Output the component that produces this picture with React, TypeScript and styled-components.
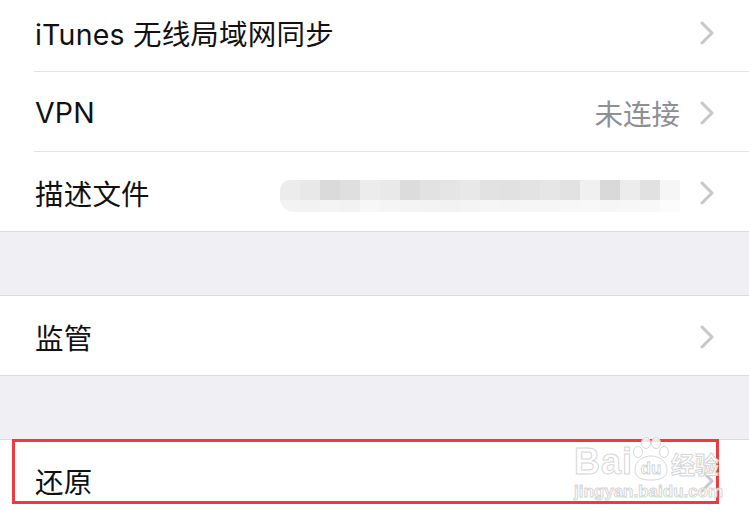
import styled, { createGlobalStyle } from "styled-components";

const GlobalStyle = createGlobalStyle`
  html, body {
    margin: 0;
    padding: 0;
    background: #efeff4;
    overflow: hidden;
  }
  body {
    font-family: Inter, "Noto Sans CJK SC", sans-serif;
  }
`;

const Page = styled.div`
  position: relative;
  width: 749px;
  height: 516px;
  overflow: hidden;
  background: #efeff4;
`;

const Group = styled.div<{ $first?: boolean }>`
  background: #fff;
  border-top: ${(p) => (p.$first ? "none" : "1px solid #dcdce0")};
  border-bottom: 1px solid #dcdce0;
  margin-top: ${(p) => (p.$first ? "-8px" : "0")};
`;

const Spacer = styled.div`
  height: 63px;
`;

const Row = styled.div<{ $divider?: boolean }>`
  height: 79px;
  display: flex;
  align-items: center;
  padding: 2px 35px 0 35px;
  box-sizing: border-box;
  position: relative;
  ${(p) =>
    p.$divider &&
    `
    margin-bottom: 1px;
    &::after {
      content: "";
      position: absolute;
      left: 34px;
      right: 0;
      bottom: -1px;
      height: 1px;
      background: #e2e2e5;
    }
  `}
`;

const Label = styled.span`
  font-size: 28.5px;
  color: #111;
  flex: 1;
  letter-spacing: 0.2px;
`;

const Detail = styled.span`
  font-size: 28.5px;
  color: #8e8e93;
  margin-right: 20px;
`;

const Mosaic = styled.div`
  display: grid;
  grid-template-columns: repeat(20, 20px);
  grid-template-rows: 20px 12px;
  margin-right: 20px;
  margin-top: 6px;
  border-radius: 10px 0 0 14px;
  overflow: hidden;
`;

const Tile = styled.div<{ $shade: string }>`
  background: ${(p) => p.$shade};
`;

const ChevronWrap = styled.svg`
  width: 14px;
  height: 24px;
  flex: none;
`;

const Highlight = styled.div`
  position: absolute;
  left: 12px;
  top: 439px;
  width: 701px;
  height: 59px;
  border: 3px solid #f0393d;
`;

const Watermark = styled.div`
  position: absolute;
  left: 574px;
  top: 436px;
  width: 150px;
  height: 68px;
  pointer-events: none;
  font-family: "Liberation Sans", Arial, "Noto Sans CJK SC", sans-serif;
  color: rgba(255, 255, 255, 0.85);
  -webkit-text-stroke: 1px #d6d6d6;
`;

const MarkLine = styled.div`
  display: flex;
  align-items: flex-end;
  height: 46px;
`;

const MarkBai = styled.span`
  font-size: 36px;
  font-weight: 700;
  line-height: 40px;
  letter-spacing: 1px;
`;

const MarkPaw = styled.svg`
  width: 38px;
  height: 46px;
  margin: 0 1px 0 -1px;
`;

const MarkCn = styled.span`
  font-size: 24px;
  font-weight: 700;
  line-height: 36px;
  font-family: "Noto Sans CJK SC", sans-serif;
`;

const MarkUrl = styled.div`
  font-size: 17px;
  font-weight: 700;
  margin-top: 0px;
`;

function Chevron() {
  return (
    <ChevronWrap viewBox="0 0 14 24">
      <path
        d="M2 2 L12 12 L2 22"
        fill="none"
        stroke="#c7c7cc"
        strokeWidth="3"
        strokeLinecap="round"
        strokeLinejoin="round"
      />
    </ChevronWrap>
  );
}

const topShades = [
  "#ececec", "#e8e8e8", "#dadada", "#dfdfdf", "#ececec", "#e9e9e9", "#dcdcdc", "#e2e2e2",
  "#e5e5e5", "#e8e8e8", "#e2e2e2", "#e1e1e1", "#e3e3e3", "#e6e6e6", "#e2e2e2", "#f0f0f0",
  "#d9d9d9", "#ececec", "#e1e1e1", "#f6f6f6",
];
const bottomShades = [
  "#f3f3f3", "#f2f2f2", "#f4f4f4", "#f2f2f2", "#f7f7f7", "#f5f5f5", "#f4f4f4", "#f3f3f3",
  "#f2f2f2", "#f4f4f4", "#f6f6f6", "#f5f5f5", "#f6f6f6", "#f6f6f6", "#f7f7f7", "#f8f8f8",
  "#f6f6f6", "#f7f7f7", "#f8f8f8", "#fcfcfc",
];

export default function App() {
  return (
    <Page>
      <GlobalStyle />
      <Group $first>
        <Row $divider>
          <Label>iTunes 无线局域网同步</Label>
          <Chevron />
        </Row>
        <Row $divider>
          <Label>VPN</Label>
          <Detail>未连接</Detail>
          <Chevron />
        </Row>
        <Row>
          <Label>描述文件</Label>
          <Mosaic>
            {topShades.map((s, i) => (
              <Tile key={"t" + i} $shade={s} />
            ))}
            {bottomShades.map((s, i) => (
              <Tile key={"b" + i} $shade={s} />
            ))}
          </Mosaic>
          <Chevron />
        </Row>
      </Group>
      <Spacer />
      <Group>
        <Row>
          <Label>监管</Label>
          <Chevron />
        </Row>
      </Group>
      <Spacer />
      <Group>
        <Row>
          <Label>还原</Label>
          <Chevron />
        </Row>
      </Group>
      <Highlight />
      <Watermark>
        <MarkLine>
          <MarkBai>Bai</MarkBai>
          <MarkPaw viewBox="0 0 38 46">
            <g fill="rgba(255,255,255,0.85)" stroke="#d6d6d6" strokeWidth="1">
              <ellipse cx="6" cy="16" rx="4.5" ry="5.5" />
              <ellipse cx="14" cy="7" rx="4.5" ry="5.5" />
              <ellipse cx="24" cy="7" rx="4.5" ry="5.5" />
              <ellipse cx="32" cy="16" rx="4.5" ry="5.5" />
              <path d="M3 34 C3 24 12 20 19 20 C26 20 35 24 35 34 C35 42 28 44 19 44 C10 44 3 42 3 34 Z" />
            </g>
            <text
              x="19"
              y="38"
              textAnchor="middle"
              fontSize="17"
              fontWeight="700"
              fill="rgba(255,255,255,0.9)"
              stroke="#d0d0d0"
              strokeWidth="0.8"
              fontFamily="Liberation Sans, Arial, sans-serif"
            >
              du
            </text>
          </MarkPaw>
          <MarkCn>经验</MarkCn>
        </MarkLine>
        <MarkUrl>jingyan.baidu.com</MarkUrl>
      </Watermark>
    </Page>
  );
}
